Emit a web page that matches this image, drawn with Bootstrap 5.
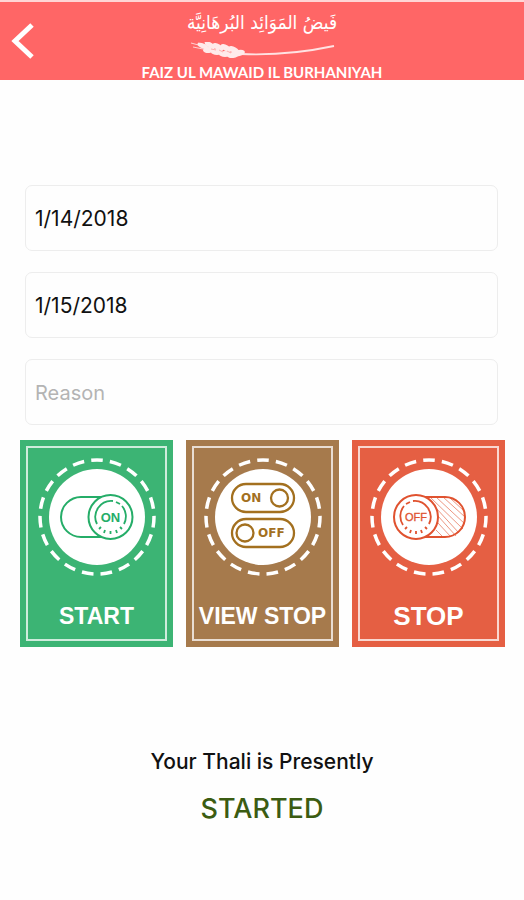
<!DOCTYPE html>
<html lang="en">
<head>
<meta charset="utf-8">
<meta name="viewport" content="width=device-width, initial-scale=1">
<title>Faiz ul Mawaid il Burhaniyah</title>
<link href="https://cdn.jsdelivr.net/npm/bootstrap@5.3.0/dist/css/bootstrap.min.css" rel="stylesheet">
<style>
  body { font-family: Inter, "Liberation Sans", sans-serif; color: #111; background: #fefefe; }
  .topbar { background: #ff6666; border-top: 2px solid #ffd6d6; min-height: 80px; }
  .back-btn { width: 48px; height: 78px; }
  .brand-arabic { font: 19px/40px "DejaVu Sans Condensed", "DejaVu Sans", sans-serif; }
  .brand-wheat { width: 146px; height: 18px; }
  .brand-latin { font: 700 15px/16px Lato, sans-serif; margin-top: 4px; }
  .fields { padding: 105px 26px 0 25px; gap: 21px; }
  .field { height: 66px; padding: 0 9px; font-size: 21px; color: #111; border: 1px solid #ededed; border-radius: 7px; background: #fefefe; }
  .field::placeholder { color: #b4b4b4; font-size: 20px; }
  .tiles { padding: 15px 19px 0 20px; }
  .tiles-row { --bs-gutter-x: 13px; }
  .tile { padding: 6px; border: 0; font-family: "Liberation Sans", Arial, sans-serif; font-weight: 700; line-height: 30px; }
  .tile-frame { border: 2px solid rgba(255, 255, 255, .75); padding-bottom: 8px; }
  .tile-label { height: 30px; margin-top: 23px; font-size: 23px; }
  .tile-label-lg { font-size: 26px; }
  .tile-green { background: #3cb474; color: #25ad68; }
  .tile-brown { background: #a67a4c; color: #a3701f; }
  .tile-red { background: #e55f43; color: #e0522f; }
  .status { padding-top: 100px; }
  .status-caption { font-size: 21px; line-height: 30px; }
  .status-value { font-size: 27px; line-height: 40px; color: #3b5c12; margin-top: 12px; }
</style>
<script src="https://cdn.jsdelivr.net/npm/bootstrap@5.3.0/dist/js/bootstrap.bundle.min.js"></script>
</head>
<body>
<header class="topbar d-flex text-white">
  <button type="button" class="back-btn btn p-0 border-0 rounded-0" aria-label="Back">
    <svg class="d-block" width="48" height="78" viewBox="0 0 48 78" fill="none" stroke="#fff" stroke-width="5"><path d="M32 23 15 39 32 55"/></svg>
  </button>
  <div class="flex-grow-1 d-flex flex-column align-items-center me-5">
    <div class="brand-arabic text-nowrap" lang="ar" dir="rtl">فَيضُ المَوَائِد البُرهَانِيَّة</div>
    <svg class="brand-wheat" viewBox="0 0 146 18" fill="#ffeaea">
      <path d="M52 12Q98 14 145 4" fill="none" stroke="#ffe2e2" stroke-width="1.800"/>
      <path d="M2 1 17 5M4 5 19 8M9 1 25 5" stroke="#ffd0d0"/>
      <g>
        <ellipse cx="14" cy="4" rx="6" ry="2.500" transform="rotate(22 14 4)"/>
        <ellipse cx="21" cy="3" rx="6" ry="2.500" transform="rotate(28 21 3)"/>
        <ellipse cx="20" cy="8" rx="6" ry="3" transform="rotate(-5 20 8)"/>
        <ellipse cx="29" cy="5" rx="6" ry="3" transform="rotate(30 29 5)"/>
        <ellipse cx="28" cy="10" rx="6" ry="3"/>
        <ellipse cx="37" cy="6" rx="6" ry="3" transform="rotate(30 37 6)"/>
        <ellipse cx="36" cy="12" rx="6" ry="3"/>
        <ellipse cx="45" cy="8" rx="6" ry="3" transform="rotate(30 45 8)"/>
        <ellipse cx="44" cy="13" rx="6" ry="3" transform="rotate(-8 44 13)"/>
        <ellipse cx="50" cy="11" rx="6" ry="3" transform="rotate(-12 50 11)"/>
      </g>
      <path d="M22 7 27 8M30 8 34 10M38 9 42 11" stroke="#ffb0b0" fill="none"/>
    </svg>
    <div class="brand-latin text-nowrap">FAIZ UL MAWAID IL BURHANIYAH</div>
  </div>
</header>

<main>
  <form>
    <div class="fields d-flex flex-column">
      <input class="field form-control" type="text" value="1/14/2018" aria-label="From date">
      <input class="field form-control" type="text" value="1/15/2018" aria-label="To date">
      <input class="field form-control" type="text" placeholder="Reason" aria-label="Reason">
    </div>

    <div class="tiles">
      <div class="tiles-row row row-cols-3">
        <div class="col">
          <button type="button" class="tile tile-green d-block w-100">
            <span class="tile-frame d-block">
              <svg class="d-block w-100" viewBox="8 8 137 130" fill="none" stroke="currentColor" stroke-width="2">
                <circle cx="77" cy="77" r="57" stroke="#fff" stroke-width="3.500" pathLength="190" stroke-dasharray="6.200 3.800" stroke-dashoffset="50.600"/>
                <circle cx="77" cy="77" r="48" fill="#fff" stroke="none"/>
                <path d="M84 57H61a20 20 0 0 0 0 40h23"/>
                <circle cx="90.500" cy="77" r="22" fill="#fff"/>
                <path d="M77 84A16 16 0 0 1 93 61M96 62l4 2M102 66A16 16 0 0 1 104 84" stroke-width="1.800"/>
                <path d="M81 87l-2 2M85 90l-1 3M90.500 91v3M96 90l1 3M100 87l2 2" stroke-width="1.800"/>
                <text x="90.500" y="81.500" text-anchor="middle" font-size="13" font-weight="700" fill="currentColor" stroke="none">ON</text>
              </svg>
              <span class="tile-label d-block text-white text-nowrap">START</span>
            </span>
          </button>
        </div>
        <div class="col">
          <button type="button" class="tile tile-brown d-block w-100">
            <span class="tile-frame d-block">
              <svg class="d-block w-100" viewBox="8 8 137 130" fill="none" stroke="currentColor" stroke-width="2.300">
                <circle cx="77" cy="77" r="57" stroke="#fff" stroke-width="3.500" pathLength="190" stroke-dasharray="6.200 3.800" stroke-dashoffset="50.600"/>
                <circle cx="77" cy="77" r="48" fill="#fff" stroke="none"/>
                <rect x="46" y="44" width="62" height="28" rx="14"/>
                <circle cx="93.500" cy="58" r="8.500"/>
                <rect x="46" y="79" width="62" height="28" rx="14"/>
                <circle cx="59" cy="93" r="8.500"/>
                <g font-family="DejaVu Sans" font-size="12" font-weight="700" fill="currentColor" stroke="none">
                  <text x="55" y="62">ON</text>
                  <text x="72" y="97">OFF</text>
                </g>
              </svg>
              <span class="tile-label d-block text-white text-nowrap">VIEW STOP</span>
            </span>
          </button>
        </div>
        <div class="col">
          <button type="button" class="tile tile-red d-block w-100">
            <span class="tile-frame d-block">
              <svg class="d-block w-100" viewBox="8 8 137 130" fill="none" stroke="currentColor" stroke-width="2">
                <circle cx="77" cy="77" r="57" stroke="#fff" stroke-width="3.500" pathLength="190" stroke-dasharray="6.200 3.800" stroke-dashoffset="50.600"/>
                <circle cx="77" cy="77" r="48" fill="#fff" stroke="none"/>
                <path d="M78 57l33 32M84 57l29 27M91 57l22 20M98 58l13 12M84 68l23 25M86 76l18 20M86 83l13 14M84 90l7 7" stroke-width="1" opacity=".6"/>
                <path d="M70 57h23a20 20 0 0 1 0 40H70"/>
                <circle cx="64" cy="77" r="22" fill="#fff"/>
                <path d="M51 85A16 16 0 0 1 52 66M54 64l4-2M61 61A16 16 0 0 1 77 84" stroke-width="1.800"/>
                <path d="M55 87l-2 2M59 90l-1 3M64 91v3M69 90l1 3M73 87l2 2" stroke-width="1.800"/>
                <text x="64" y="81" text-anchor="middle" font-size="11" font-weight="400" fill="currentColor" stroke="currentColor" stroke-width=".3">OFF</text>
              </svg>
              <span class="tile-label tile-label-lg d-block text-white text-nowrap">STOP</span>
            </span>
          </button>
        </div>
      </div>
    </div>
  </form>

  <section class="status text-center">
    <p class="status-caption fw-medium mb-0">Your Thali is Presently</p>
    <p class="status-value fw-medium mb-0">STARTED</p>
  </section>
</main>
</body>
</html>
